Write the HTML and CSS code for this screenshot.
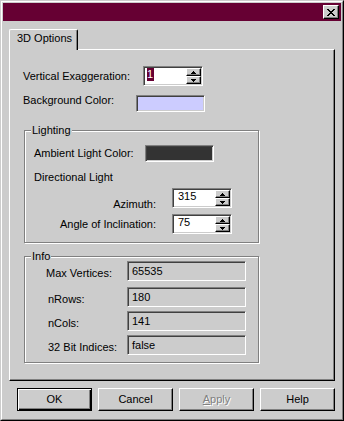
FILE: index.html
```html
<!DOCTYPE html>
<html>
<head>
<meta charset="utf-8">
<title>3D Options</title>
<link rel="stylesheet" href="styles.css">
</head>
<body>
<div class="window">
  <div class="frame">
    <div class="titlebar">
      <button class="close" aria-label="Close">
        <svg width="8" height="7" viewBox="0 0 8 7" shape-rendering="crispEdges"><path fill="#000" d="M0 0h2v1H0zM6 0h2v1H6zM1 1h2v1H1zM5 1h2v1H5zM2 2h4v1H2zM3 3h2v1H3zM2 4h4v1H2zM1 5h2v1H1zM5 5h2v1H5zM0 6h2v1H0zM6 6h2v1H6z"/></svg>
      </button>
    </div>
    <div class="content">
      <div class="tabs"><div class="tab">3D Options</div></div>
      <div class="panel">
        <div class="row row-vex">
          <span class="lbl">Vertical Exaggeration:</span>
          <div class="spin">
            <div class="spin-text"><span class="sel">1</span></div>
            <div class="spin-btns">
              <div class="spin-btn"><svg width="5" height="3" viewBox="0 0 5 3" shape-rendering="crispEdges"><path d="M2 0h1v1H2zM1 1h3v1H1zM0 2h5v1H0z"/></svg></div>
              <div class="spin-btn"><svg width="5" height="3" viewBox="0 0 5 3" shape-rendering="crispEdges"><path d="M0 0h5v1H0zM1 1h3v1H1zM2 2h1v1H2z"/></svg></div>
            </div>
          </div>
        </div>
        <div class="row row-bg">
          <span class="lbl">Background Color:</span>
          <div class="swatch lavender"></div>
        </div>

        <fieldset class="group lighting">
          <legend>Lighting</legend>
          <div class="inner">
            <div class="row amb">
              <span class="lbl">Ambient Light Color:</span>
              <div class="swatch dark"></div>
            </div>
            <div class="subhead">Directional Light</div>
            <div class="row dir-row az">
              <span class="lbl">Azimuth:</span>
              <div class="spin">
                <div class="spin-text plain">315</div>
                <div class="spin-btns">
                  <div class="spin-btn"><svg width="5" height="3" viewBox="0 0 5 3" shape-rendering="crispEdges"><path d="M2 0h1v1H2zM1 1h3v1H1zM0 2h5v1H0z"/></svg></div>
                  <div class="spin-btn"><svg width="5" height="3" viewBox="0 0 5 3" shape-rendering="crispEdges"><path d="M0 0h5v1H0zM1 1h3v1H1zM2 2h1v1H2z"/></svg></div>
                </div>
              </div>
            </div>
            <div class="row dir-row incl">
              <span class="lbl">Angle of Inclination:</span>
              <div class="spin">
                <div class="spin-text plain">75</div>
                <div class="spin-btns">
                  <div class="spin-btn"><svg width="5" height="3" viewBox="0 0 5 3" shape-rendering="crispEdges"><path d="M2 0h1v1H2zM1 1h3v1H1zM0 2h5v1H0z"/></svg></div>
                  <div class="spin-btn"><svg width="5" height="3" viewBox="0 0 5 3" shape-rendering="crispEdges"><path d="M0 0h5v1H0zM1 1h3v1H1zM2 2h1v1H2z"/></svg></div>
                </div>
              </div>
            </div>
          </div>
        </fieldset>

        <fieldset class="group info">
          <legend>Info</legend>
          <div class="inner">
            <div class="info-row first"><span class="lbl">Max Vertices:</span><div class="field">65535</div></div>
            <div class="info-row r2"><span class="lbl">nRows:</span><div class="field">180</div></div>
            <div class="info-row r3"><span class="lbl">nCols:</span><div class="field">141</div></div>
            <div class="info-row r3"><span class="lbl">32 Bit Indices:</span><div class="field">false</div></div>
          </div>
        </fieldset>
      </div>
      <div class="buttons">
        <button class="btn default">OK</button>
        <button class="btn">Cancel</button>
        <button class="btn disabled"><span><u>A</u>pply</span></button>
        <button class="btn">Help</button>
      </div>
    </div>
  </div>
</div>
</body>
</html>
```

FILE: styles.css
```css
* { box-sizing: border-box; }
html, body { margin: 0; padding: 0; }
body {
  width: 344px;
  height: 421px;
  overflow: hidden;
  background: #cccccc;
  font: 11px/13px "Liberation Sans", Arial, sans-serif;
  color: #000;
}

.window {
  width: 344px;
  height: 421px;
  border: 1px solid;
  border-color: #cccccc #000 #000 #cccccc;
  background: #cccccc;
}
.frame {
  height: 100%;
  border: 1px solid;
  border-color: #fff #808080 #808080 #fff;
  padding: 1px;
  display: flex;
  flex-direction: column;
}

.titlebar {
  flex: none;
  height: 18px;
  background: #660033;
  display: flex;
  justify-content: flex-end;
  align-items: center;
  padding-right: 2px;
}
.close {
  width: 16px;
  height: 14px;
  padding: 0;
  margin: 0;
  border: 1px solid;
  border-color: #fff #000 #000 #fff;
  box-shadow: inset -1px -1px 0 #808080;
  background: #cccccc;
  display: flex;
  align-items: center;
  justify-content: center;
}
.close svg { display: block; }

.content {
  flex: 1;
  padding: 8px 6px 0;
  display: flex;
  flex-direction: column;
}

.tabs { display: flex; height: 20px; flex: none; }
.tab {
  position: relative;
  z-index: 1;
  width: 69px;
  height: 21px;
  margin-bottom: -1px;
  background: #cccccc;
  border-left: 1px solid #fff;
  border-top: 1px solid #fff;
  border-right: 1px solid #000;
  box-shadow: inset -1px 0 0 #808080;
  border-top-left-radius: 2px;
  border-top-right-radius: 2px;
  padding: 2px 0 0 7px;
  white-space: nowrap;
}

.panel {
  flex: none;
  height: 332px;
  border: 1px solid;
  border-color: #fff #000 #000 #fff;
  box-shadow: inset -1px -1px 0 #808080;
  padding: 16px 0 0 14px;
}

.row { display: flex; align-items: center; }
.lbl { white-space: nowrap; flex: none; }

.row-vex { height: 20px; }
.row-vex .lbl { width: 120px; margin-left: -1px; }

.row-bg { height: 17px; margin-top: 9px; align-items: flex-start; }
.row-bg .lbl { width: 113px; margin-left: -1px; margin-top: -1px; }

.swatch {
  width: 69px;
  height: 17px;
  border: 1px solid;
  border-color: #808080 #fff #fff #808080;
  box-shadow: inset 1px 1px 0 #404040, inset -1px -1px 0 #cccccc;
}
.lavender { background: #ccccff; }
.dark { background: #333333; }

.spin {
  width: 60px;
  height: 20px;
  flex: none;
  border: 1px solid;
  border-color: #808080 #fff #fff #808080;
  box-shadow: inset 1px 1px 0 #404040, inset -1px -1px 0 #cccccc;
  background: #fff;
  padding: 1px;
  display: flex;
}
.spin-text { flex: 1; padding-left: 2px; line-height: 13px; }
.spin-text.plain { padding-left: 4px; }
.sel { background: #660033; color: #fff; display: inline-block; padding: 0 1px 0 0; }
.spin-btns { width: 15px; display: flex; flex-direction: column; }
.spin-btn {
  height: 8px;
  background: #cccccc;
  border: 1px solid;
  border-color: #fff #000 #000 #fff;
  box-shadow: inset -1px -1px 0 #808080;
  display: flex;
  align-items: center;
  justify-content: center;
}
.spin-btn svg { display: block; }

.group {
  margin: 12px 0 0;
  padding: 0;
  width: 235px;
  min-width: 0;
  border: 1px solid #808080;
  box-shadow: inset 1px 1px 0 #fff, 1px 1px 0 #fff;
}
.group legend {
  margin-left: 6px;
  padding: 0 1px;
  background: #cccccc;
  line-height: 13px;
}

.lighting .inner { padding: 8px 0 8px 9px; }
.amb { height: 17px; }
.amb .lbl { width: 111px; }
.subhead { margin-top: 9px; }
.dir-row { height: 20px; align-items: flex-start; }
.dir-row .lbl { width: 138px; padding-right: 16px; text-align: right; }
.az { margin-top: 4px; }
.az .lbl { margin-top: 10px; }
.incl { margin-top: 6px; }
.incl .lbl { margin-top: 4px; }

.info { margin-top: 7px; }
.info .inner { padding: 0 0 7px 23px; }
.info-row { display: flex; align-items: flex-start; height: 20px; }
.info-row .lbl { width: 79px; margin-top: 6px; }
.info-row.first { margin-top: -2px; }
.info-row.first .lbl { width: 81px; margin-left: -2px; }
.info-row.r2 { margin-top: 6px; }
.info-row.r3 { margin-top: 4px; }
.field {
  width: 119px;
  height: 20px;
  border: 1px solid;
  border-color: #808080 #fff #fff #808080;
  box-shadow: inset 1px 1px 0 #404040, inset -1px -1px 0 #cccccc;
  padding: 3px 4px;
  line-height: 13px;
}

.buttons {
  flex: none;
  display: flex;
  justify-content: flex-end;
  gap: 6px;
  margin-top: 7px;
}
.btn {
  width: 75px;
  height: 23px;
  margin: 0;
  padding: 0;
  border: 1px solid;
  border-color: #fff #000 #000 #fff;
  box-shadow: inset -1px -1px 0 #808080;
  background: #cccccc;
  font: inherit;
  line-height: 13px;
  color: #000;
  display: flex;
  align-items: center;
  justify-content: center;
}
.btn.default {
  border-color: #000;
  box-shadow: inset 1px 1px 0 #fff, inset -1px -1px 0 #000, inset -2px -2px 0 #808080;
}
.btn.disabled {
  color: #808080;
  text-shadow: 1px 1px 0 #fff;
}
```
